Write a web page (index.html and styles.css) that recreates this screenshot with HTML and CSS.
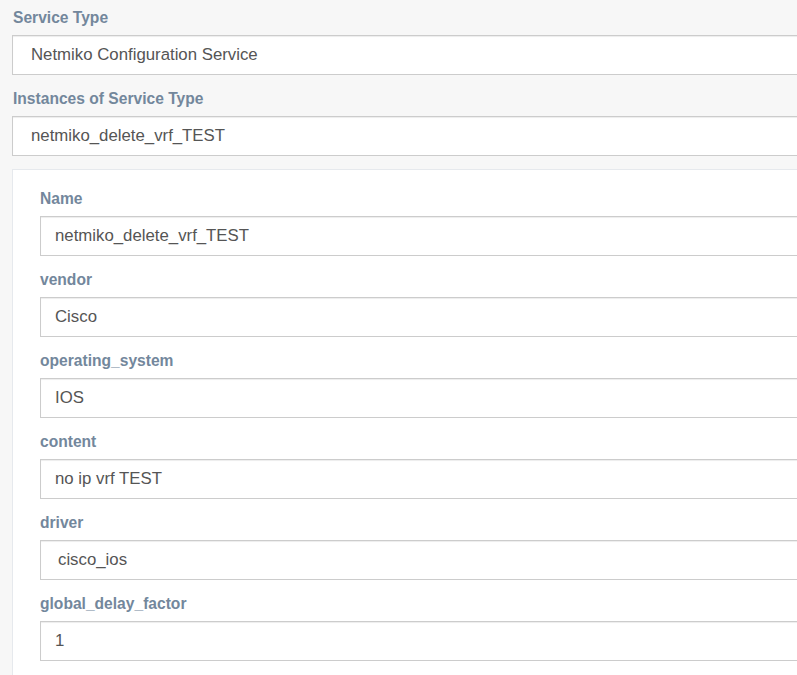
FILE: index.html
```html
<!DOCTYPE html>
<html>
<head>
<meta charset="utf-8">
<link rel="stylesheet" href="styles.css">
</head>
<body>
<div class="page">
  <div class="group">
    <label class="label">Service Type</label>
    <div class="field field-select">Netmiko Configuration Service</div>
  </div>
  <div class="group">
    <label class="label">Instances of Service Type</label>
    <div class="field field-select">netmiko_delete_vrf_TEST</div>
  </div>
  <div class="panel">
    <div class="group">
      <label class="label">Name</label>
      <div class="field">netmiko_delete_vrf_TEST</div>
    </div>
    <div class="group">
      <label class="label">vendor</label>
      <div class="field">Cisco</div>
    </div>
    <div class="group">
      <label class="label">operating_system</label>
      <div class="field">IOS</div>
    </div>
    <div class="group">
      <label class="label">content</label>
      <div class="field">no ip vrf TEST</div>
    </div>
    <div class="group">
      <label class="label">driver</label>
      <div class="field field-driver">cisco_ios</div>
    </div>
    <div class="group">
      <label class="label">global_delay_factor</label>
      <div class="field">1</div>
    </div>
  </div>
</div>
</body>
</html>
```
FILE: styles.css
```css
html, body {
  margin: 0;
  padding: 0;
  overflow: hidden;
}
body {
  background: #f7f7f7;
  font-family: "Liberation Sans", Arial, sans-serif;
  width: 797px;
  height: 675px;
}
.page {
  width: 1100px;
  padding: 7px 0 0 12px;
}
.group {
  margin-bottom: 13px;
}
.label {
  display: block;
  font-size: 15.6px;
  font-weight: bold;
  line-height: 20px;
  color: #73879c;
  padding-top: 1px;
  margin: 0 0 7px 1px;
}
.field {
  box-sizing: border-box;
  height: 40px;
  line-height: 38px;
  background: #fff;
  border: 1px solid #ccc;
  box-shadow: inset 0 1px 1px rgba(0, 0, 0, 0.075);
  font-size: 16.8px;
  color: #555;
  padding-left: 14px;
  white-space: nowrap;
}
.field-select {
  padding-left: 18px;
}
.field-driver {
  padding-left: 17px;
}
.panel {
  background: #fff;
  border: 1px solid #e6e9ed;
  padding: 18px 0 30px 27px;
}
.panel .label {
  margin-left: 0;
}
```
